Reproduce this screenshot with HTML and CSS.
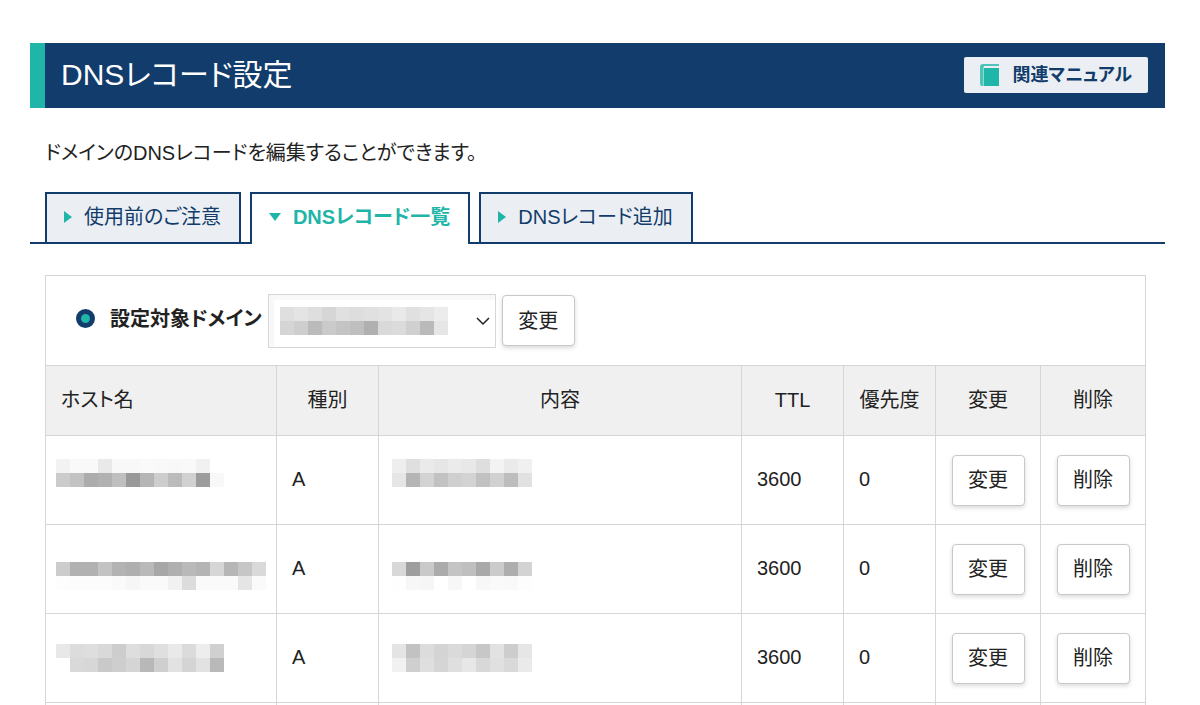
FILE: index.html
```
<!DOCTYPE html>
<html lang="ja">
<head>
    <meta charset="UTF-8">
    <meta name="viewport" content="width=device-width, initial-scale=1.0">
    <title>DNSレコード設定</title>
    <link rel="stylesheet" href="styles.css">
</head>
<body>
    <main>
        <header class="page-header">
            <h1>DNSレコード設定</h1>
            <a href="#manual" class="manual-btn">
                <svg width="20" height="22" viewBox="0 0 20 22">
                    <path d="M3 0H19V2H4V3H3V22H2Q0 22 0 20V3Q0 0 3 0Z" fill="#4cc4b8"/>
                    <path d="M4 4H19V22H4Z" fill="#1fb5a8"/>
                    <path d="M3 3H4V22H3Z" fill="#8fd9d1"/>
                </svg>
                関連マニュアル
            </a>
        </header>

        <p class="lead">ドメインのDNSレコードを編集することができます。</p>

        <nav class="tabs">
            <a href="#notice" class="tab">使用前のご注意</a>
            <a href="#list" class="tab active">DNSレコード一覧</a>
            <a href="#add" class="tab">DNSレコード追加</a>
        </nav>

        <section class="records">
            <form class="domain-form">
                <label for="domain">設定対象ドメイン</label>
                <div class="domain-select">
                    <select id="domain"><option></option></select>
                    <svg class="mosaic" data-cells="df e4 de d6 e0 dd e0 e3 e9 e0 e5 ec|d5 ce bb ca c4 bf b0 d9 db d0 ba e6"></svg>
                    <svg class="chevron" width="14" height="9" viewBox="0 0 14 9"><path d="M1 1L7 7L13 1" fill="none" stroke="#222" stroke-width="1.5"/></svg>
                </div>
                <button type="button" class="btn">変更</button>
            </form>

            <table>
                <colgroup>
                    <col class="col-host">
                    <col class="col-type">
                    <col>
                    <col class="col-ttl">
                    <col class="col-priority">
                    <col class="col-action">
                    <col class="col-action">
                </colgroup>
                <thead>
                    <tr>
                        <th class="host">ホスト名</th>
                        <th>種別</th>
                        <th>内容</th>
                        <th>TTL</th>
                        <th>優先度</th>
                        <th>変更</th>
                        <th>削除</th>
                    </tr>
                </thead>
                <tbody>
                    <tr>
                        <td class="masked"><svg class="mosaic" data-cells="f2 f9 f9 e9 f8 f8 fa f9 f8 f9 f1 ff|cb c2 ac b1 bf 99 b5 cd bb d1 9c f8|ff"></svg></td>
                        <td>A</td>
                        <td class="masked content"><svg class="mosaic" data-cells="ee df ea e6 eb e8 de f3 ea f0|e6 b5 d3 c2 cf d3 c1 d1 bd e1|ff"></svg></td>
                        <td>3600</td>
                        <td>0</td>
                        <td class="action"><button type="button" class="btn">変更</button></td>
                        <td class="action"><button type="button" class="btn">削除</button></td>
                    </tr>
                    <tr>
                        <td class="masked"><svg class="mosaic" data-cells="ff|cc b1 b1 c3 b3 af b9 a7 af b9 b4 d6 b6 c6 d9|fd fc fc fc fa f6 fa fa f1 dc fa fa fa e5 fa"></svg></td>
                        <td>A</td>
                        <td class="masked content"><svg class="mosaic" data-cells="ff|d8 9e c9 ab c4 bf a9 cb ae d3|fe f7 f6 ff f7 ff f7 fa f9 fd"></svg></td>
                        <td>3600</td>
                        <td>0</td>
                        <td class="action"><button type="button" class="btn">変更</button></td>
                        <td class="action"><button type="button" class="btn">削除</button></td>
                    </tr>
                    <tr>
                        <td class="masked"><svg class="mosaic" data-cells="e8 dc de d9 cd de d8 df e9 db ed d0|ff d9 d7 c9 ce d5 b8 cf e2 d4 e2 b9"></svg></td>
                        <td>A</td>
                        <td class="masked content"><svg class="mosaic" data-cells="e4 c2 dc d4 da d5 c7 e2 cd e6|f1 cf df d5 df e7 d8 e0 d9 ea"></svg></td>
                        <td>3600</td>
                        <td>0</td>
                        <td class="action"><button type="button" class="btn">変更</button></td>
                        <td class="action"><button type="button" class="btn">削除</button></td>
                    </tr>
                    <tr class="rest">
                        <td></td>
                        <td></td>
                        <td></td>
                        <td></td>
                        <td></td>
                        <td></td>
                        <td></td>
                    </tr>
                </tbody>
            </table>
        </section>
    </main>

    <script>
        const CELL = 14;

        // each data-cells row is a list of grey levels in hex
        document.querySelectorAll('.mosaic').forEach(svg => {
            const rows = svg.dataset.cells.split('|').map(row => row.split(' '));
            svg.setAttribute('width', Math.max(...rows.map(row => row.length)) * CELL);
            svg.setAttribute('height', rows.length * CELL);
            svg.innerHTML = rows.map((row, y) => row.map((g, x) =>
                `<rect x="${x * CELL}" y="${y * CELL}" width="${CELL}" height="${CELL}" fill="#${g}${g}${g}"/>`
            ).join('')).join('');
        });
    </script>
</body>
</html>
```
FILE: styles.css
```
*,
*::before {
    margin: 0;
    padding: 0;
    box-sizing: border-box;
}

body {
    background-color: #fff;
    color: #222;
    font-family: "Liberation Sans", "Noto Sans CJK JP", sans-serif;
    font-size: 20px;
    line-height: 30px;
    font-feature-settings: "palt";
}

main {
    padding: 43px 35px 0 30px;
}

.page-header {
    display: flex;
    justify-content: space-between;
    align-items: center;
    height: 65px;
    padding: 0 17px 2px 16px;
    border-left: 15px solid #1fb5a8;
    background-color: #123c6b;
    color: #fff;
}

.page-header h1 {
    font-size: 30px;
    font-weight: 400;
    line-height: 40px;
}

.manual-btn {
    display: flex;
    align-items: center;
    gap: 12px;
    height: 36px;
    padding: 0 16px;
    border-radius: 2px;
    background-color: #ebeff3;
    color: #123c6b;
    font-size: 18px;
    font-weight: 700;
    text-decoration: none;
}

.lead {
    margin: 30px 15px 24px;
}

.tabs {
    display: flex;
    gap: 9px;
    padding-left: 15px;
    border-bottom: 2px solid #123c6b;
}

.tab {
    display: flex;
    align-items: center;
    gap: 12px;
    height: 50px;
    padding: 0 18px 2px 17px;
    border: 2px solid #123c6b;
    border-bottom: 0;
    background-color: #ebeff3;
    color: #123c6b;
    text-decoration: none;
}

.tab::before {
    content: "";
    border-left: 8px solid #1fb5a8;
    border-top: 6px solid transparent;
    border-bottom: 6px solid transparent;
}

.tab.active {
    height: 52px;
    margin-bottom: -2px;
    padding-bottom: 4px;
    background-color: #fff;
    color: #1fb5a8;
    font-weight: 700;
}

.tab.active::before {
    border-top: 8px solid #1fb5a8;
    border-left: 6px solid transparent;
    border-right: 6px solid transparent;
    border-bottom: 0;
}

.records {
    margin: 31px 19px 0 15px;
}

.domain-form {
    display: flex;
    align-items: center;
    height: 90px;
    padding: 0 30px;
    border: 1px solid #d6d6d6;
    border-bottom: 0;
}

.domain-form label {
    display: flex;
    align-items: center;
    gap: 15px;
    padding-bottom: 4px;
    font-weight: 700;
}

.domain-form label::before {
    content: "";
    width: 19px;
    height: 19px;
    border: 5px solid #123c6b;
    border-radius: 50%;
    background-color: #1fb5a8;
}

.domain-select {
    position: relative;
    margin: 0 6px;
}

.domain-select select {
    display: block;
    width: 228px;
    height: 54px;
    border: 1px solid #d6d6d6;
    background-color: #fff;
    box-shadow: inset 5px 5px 0 #f8f8f8;
    appearance: none;
}

.domain-select .mosaic {
    position: absolute;
    top: 13px;
    left: 12px;
    pointer-events: none;
}

.domain-select .chevron {
    position: absolute;
    top: 23px;
    right: 6px;
    pointer-events: none;
}

.btn {
    display: inline-block;
    width: 73px;
    height: 51px;
    border: 1px solid #c8c8c8;
    border-radius: 4px;
    background-color: #fff;
    box-shadow: 0 2px 4px rgba(0,0,0,0.15);
    color: #222;
    font: inherit;
    font-feature-settings: inherit;
    cursor: pointer;
    vertical-align: middle;
}

table {
    width: 100%;
    border-collapse: collapse;
    table-layout: fixed;
}

.col-host {
    width: 231px;
}

.col-type,
.col-ttl {
    width: 102px;
}

.col-priority {
    width: 92px;
}

.col-action {
    width: 105px;
}

th,
td {
    border: 1px solid #d6d6d6;
    padding: 0 15px 2px;
    text-align: left;
}

th {
    height: 70px;
    background-color: #f0f0f0;
    font-weight: 400;
    text-align: center;
}

th.host {
    text-align: left;
}

td {
    height: 89px;
}

td.masked {
    padding: 0 0 0 10px;
}

td.content {
    padding-left: 13px;
}

td.action {
    padding: 0;
    text-align: center;
}

.mosaic {
    display: block;
}

.rest td {
    height: 3px;
    border-bottom: 0;
}
```
